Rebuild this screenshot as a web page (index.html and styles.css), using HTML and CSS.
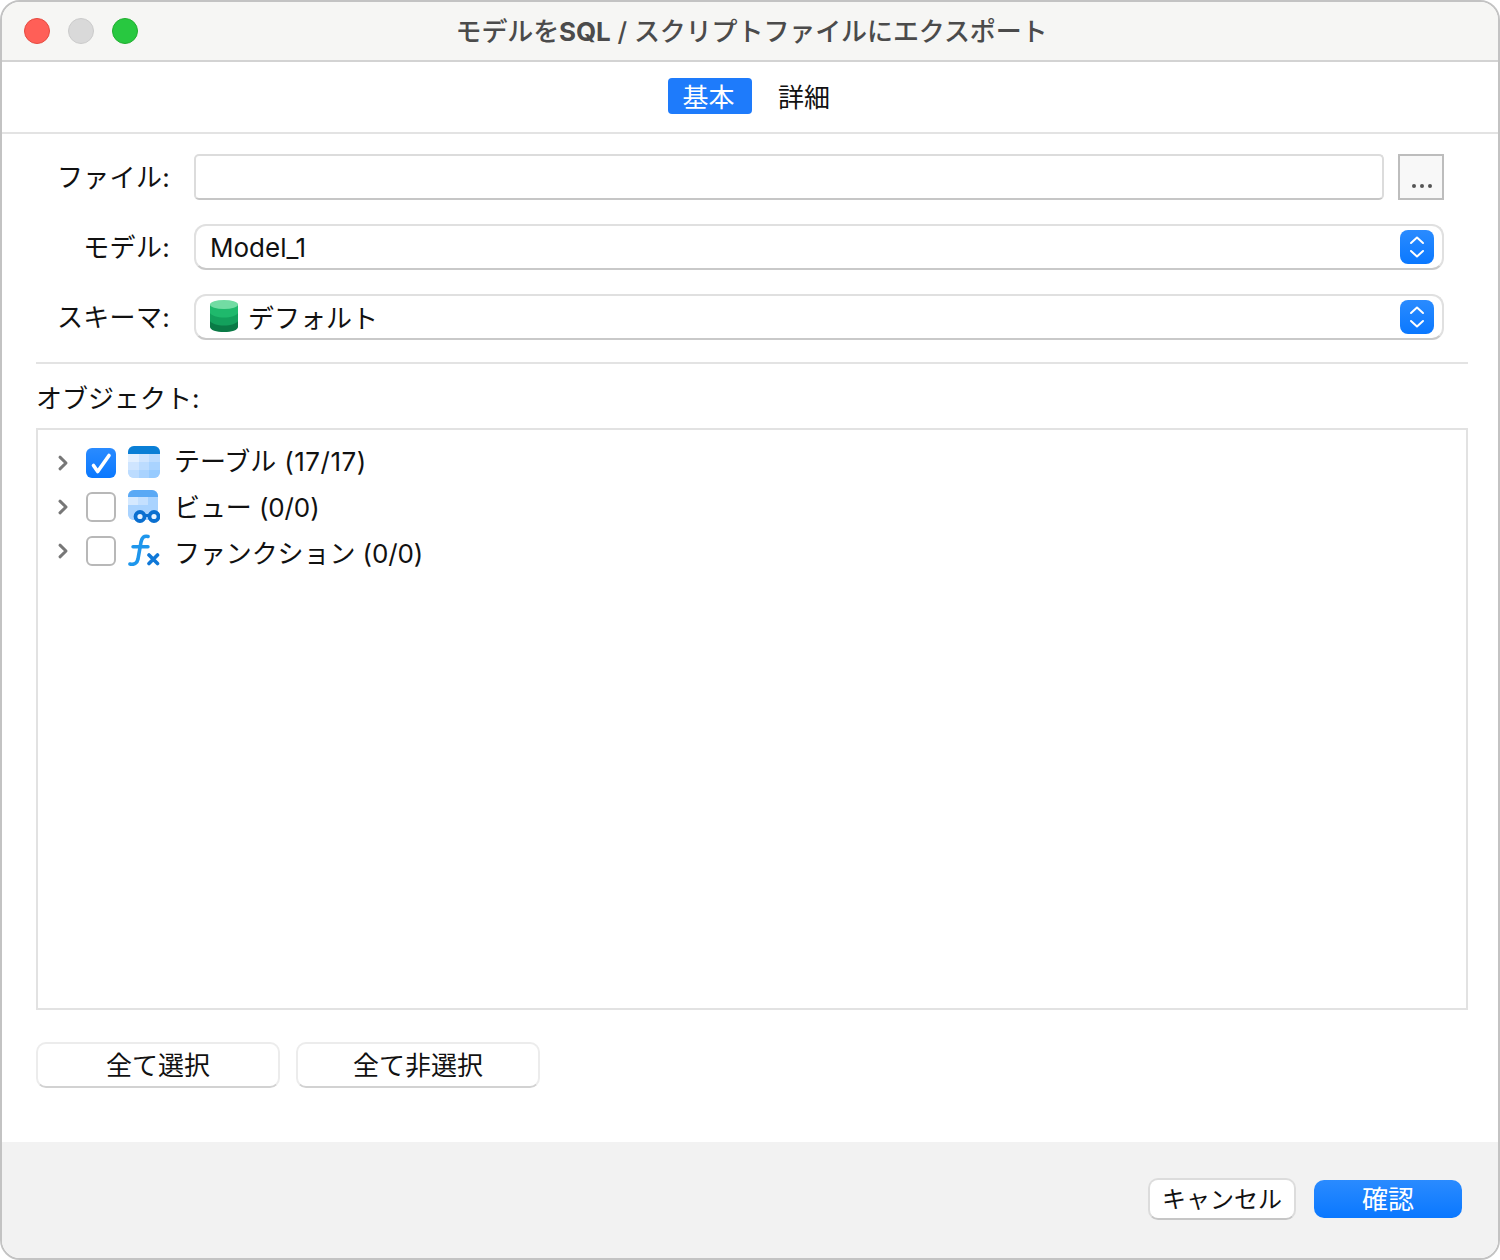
FILE: index.html
```html
<!DOCTYPE html>
<html lang="ja">
<head>
<meta charset="utf-8">
<title>モデルをSQL / スクリプトファイルにエクスポート</title>
<link rel="stylesheet" href="styles.css">
</head>
<body>
<div class="window">
  <header class="titlebar">
    <div class="lights">
      <span class="light red"></span>
      <span class="light gray"></span>
      <span class="light green"></span>
    </div>
    <div class="title">モデルを<b class="title-strong">SQL</b> / スクリプトファイルにエクスポート</div>
  </header>
  <nav class="tabs">
    <span class="tab active">基本</span>
    <span class="tab">詳細</span>
  </nav>
  <main class="content">
    <section class="form">
      <div class="row">
        <label class="label">ファイル:</label>
        <div class="input"></div>
        <div class="browse"><span class="dots"><i></i><i></i><i></i></span></div>
      </div>
      <div class="row">
        <label class="label">モデル:</label>
        <div class="select">
          <span class="select-text model-text">Model_1</span>
          <span class="stepper"><svg width="34" height="34" viewBox="0 0 34 34" fill="none" stroke="#fff" stroke-width="2" stroke-linecap="round" stroke-linejoin="round"><path d="M11 13l6-5.500 6 5.500"/><path d="M11 21l6 5.500 6-5.500"/></svg></span>
        </div>
      </div>
      <div class="row">
        <label class="label">スキーマ:</label>
        <div class="select">
          <svg class="db" width="28" height="32" viewBox="0 0 28 32">
            <path d="M0 4.500h28V27c0 3-6.300 5-14 5S0 30 0 27z" fill="#0a7a46"/>
            <path d="M0 4.500h28V21c-1.500 2.500-7 4.500-14 4.500S1.500 23.500 0 21z" fill="#13a05c"/>
            <path d="M0 4.500h28V13c-1.500 2.500-7 4.500-14 4.500S1.500 15.500 0 13z" fill="#1fb96c"/>
            <ellipse cx="14" cy="4.500" rx="14" ry="4.500" fill="#72dca3"/>
          </svg>
          <span class="select-text">デフォルト</span>
          <span class="stepper"><svg width="34" height="34" viewBox="0 0 34 34" fill="none" stroke="#fff" stroke-width="2" stroke-linecap="round" stroke-linejoin="round"><path d="M11 13l6-5.500 6 5.500"/><path d="M11 21l6 5.500 6-5.500"/></svg></span>
        </div>
      </div>
    </section>
    <hr class="divider">
    <div class="objects-label">オブジェクト:</div>
    <section class="tree">
      <div class="tree-controls">
        <div class="tree-row">
          <svg class="chev" width="12" height="16" viewBox="0 0 12 16" fill="none" stroke="#777" stroke-width="3" stroke-linecap="round" stroke-linejoin="round"><path d="M3 2.200L9 8l-6 5.800"/></svg>
          <span class="check on"><svg width="30" height="30" viewBox="0 0 30 30" fill="none" stroke="#fff" stroke-width="3.600" stroke-linecap="round" stroke-linejoin="round"><path d="M7.500 17.500l4.200 6L23 7.500"/></svg></span>
          <svg class="icon" width="32" height="32" viewBox="0 0 32 32">
            <defs><clipPath id="clipT"><rect width="32" height="32" rx="6"/></clipPath></defs>
            <g clip-path="url(#clipT)">
              <rect width="32" height="32" fill="#c4e0ff"/>
              <rect width="32" height="8" fill="#0a7fd6"/>
              <rect y="8" width="11" height="8" fill="#e3f0ff"/><rect x="11" y="8" width="10" height="8" fill="#cfe5ff"/><rect x="21" y="8" width="11" height="8" fill="#bcdcff"/>
              <rect y="16" width="11" height="8" fill="#cfe5ff"/><rect x="11" y="16" width="10" height="8" fill="#bcdcff"/><rect x="21" y="16" width="11" height="8" fill="#a9d3ff"/>
              <rect y="24" width="11" height="8" fill="#bcdcff"/><rect x="11" y="24" width="10" height="8" fill="#a9d3ff"/><rect x="21" y="24" width="11" height="8" fill="#97cbff"/>
            </g>
          </svg>
        </div>
        <div class="tree-row">
          <svg class="chev" width="12" height="16" viewBox="0 0 12 16" fill="none" stroke="#777" stroke-width="3" stroke-linecap="round" stroke-linejoin="round"><path d="M3 2.200L9 8l-6 5.800"/></svg>
          <span class="check"></span>
          <svg class="icon" width="32" height="33" viewBox="0 0 32 33">
            <defs><clipPath id="clipV"><rect width="30" height="30" rx="6"/></clipPath></defs>
            <g clip-path="url(#clipV)">
              <rect width="30" height="30" fill="#bcdcff"/>
              <rect width="30" height="7" fill="#5aa9f5"/>
              <rect y="7" width="10" height="8" fill="#d5e9ff"/><rect x="10" y="7" width="10" height="8" fill="#c4e0ff"/><rect x="20" y="7" width="10" height="8" fill="#a9d3ff"/>
              <rect y="15" width="30" height="15" fill="#a9d3ff"/>
            </g>
            <circle cx="12" cy="26.500" r="4.500" fill="#e8f3ff" stroke="#0a6fd0" stroke-width="3.800"/>
            <circle cx="26" cy="26.500" r="4.500" fill="#e8f3ff" stroke="#0a6fd0" stroke-width="3.800"/>
            <path d="M16 25.500h6" stroke="#0a6fd0" stroke-width="3"/>
          </svg>
        </div>
        <div class="tree-row">
          <svg class="chev" width="12" height="16" viewBox="0 0 12 16" fill="none" stroke="#777" stroke-width="3" stroke-linecap="round" stroke-linejoin="round"><path d="M3 2.200L9 8l-6 5.800"/></svg>
          <span class="check"></span>
          <svg class="icon" width="32" height="32" viewBox="0 0 32 32" fill="none" stroke-linecap="round">
            <path d="M2 30c4 1 7-.5 8-5l3-17c1-4.500 3-6.500 7-5.500" stroke="#1e96ec" stroke-width="3.600"/>
            <path d="M5 12.800h15" stroke="#1e96ec" stroke-width="3.400"/>
            <path d="M21 21l8.500 8.500M29.500 21L21 29.500" stroke="#0f78d8" stroke-width="3.600"/>
          </svg>
        </div>
      </div>
      <div class="tree-labels">
        <div class="tree-text">テーブル <span class="count-wide">(17/17)</span></div>
        <div class="tree-text">ビュー (0/0)</div>
        <div class="tree-text">ファンクション (0/0)</div>
      </div>
    </section>
    <div class="select-buttons">
      <button class="btn wide">全て選択</button>
      <button class="btn wide">全て非選択</button>
    </div>
  </main>
  <footer class="footer">
    <button class="btn cancel">キャンセル</button>
    <button class="btn primary">確認</button>
  </footer>
</div>
</body>
</html>
```
FILE: styles.css
```css
* { box-sizing: border-box; }
html, body { margin: 0; padding: 0; background: #fff; }
body {
  width: 1500px;
  height: 1260px;
  font-family: "Inter", "Noto Sans CJK JP", sans-serif;
  font-size: 26px;
  color: #111;
}
.window {
  width: 1500px;
  height: 1260px;
  border: 2px solid #c3c3c3;
  border-radius: 20px;
  overflow: hidden;
  display: flex;
  flex-direction: column;
  background: #fff;
}
.titlebar {
  height: 60px;
  flex: none;
  background: #f6f6f4;
  border-bottom: 2px solid #d3d3d3;
  position: relative;
  display: flex;
  align-items: center;
  justify-content: center;
}
.lights {
  position: absolute;
  left: 22px;
  top: 16px;
  display: flex;
  gap: 18px;
}
.light {
  width: 26px;
  height: 26px;
  border-radius: 50%;
  border: 1px solid;
}
.red { background: #ff5f57; border-color: #e5493f; }
.gray { background: #d9d9d9; border-color: #cbcbcb; }
.green { background: #28c840; border-color: #1fae2e; }
.title {
  font-size: 26px;
  font-weight: 500;
  color: #4b4b4b;
  line-height: 56px;
  white-space: nowrap;
  padding: 2px 0 0 3px;
  letter-spacing: -0.1px;
}
.title-strong { font-weight: 700; }
.tabs {
  height: 72px;
  flex: none;
  border-bottom: 2px solid #e3e3e3;
  display: flex;
  justify-content: center;
  align-items: flex-start;
  padding: 16px 0 0 14px;
  gap: 10px;
}
.tab {
  width: 84px;
  height: 36px;
  line-height: 40px;
  text-align: center;
  border-radius: 4px;
}
.tab.active {
  background: #1e7bfb;
  color: #fff;
  padding-right: 3px;
}
.content {
  flex: 1;
  padding: 20px 30px 0 34px;
  display: flex;
  flex-direction: column;
  min-height: 0;
}
.form {
  display: flex;
  flex-direction: column;
  gap: 24px;
  padding-right: 24px;
}
.row {
  height: 46px;
  display: flex;
  align-items: center;
}
.label {
  width: 134px;
  text-align: right;
  margin-right: 24px;
  flex: none;
  line-height: 44px;
  padding-top: 2px;
  letter-spacing: 0.3px;
}
.input {
  flex: 1;
  height: 46px;
  border-radius: 5px;
  border: 2px solid #dcdcdc;
  border-bottom-color: #c6c6c6;
  background: #fff;
}
.browse {
  width: 46px;
  height: 46px;
  margin-left: 14px;
  border: 2px solid #bdbdbd;
  background: #f8f8f8;
  display: flex;
  align-items: flex-end;
  justify-content: center;
  padding: 0 0 10px 1px;
}
.dots { display: flex; gap: 4px; }
.dots i {
  width: 4px;
  height: 4px;
  border-radius: 50%;
  background: #555;
}
.select {
  flex: 1;
  height: 46px;
  border-radius: 12px;
  border: 2px solid #e0e0e0;
  border-bottom-color: #c9c9c9;
  background: #fff;
  display: flex;
  align-items: center;
  padding: 0 8px 0 14px;
}
.select-text { flex: 1; line-height: 38px; padding-top: 4px; }
.model-text { padding-top: 2px; }
.db { flex: none; margin: -2px 10px 0 0; }
.stepper {
  width: 34px;
  height: 34px;
  flex: none;
  border-radius: 8px;
  background: linear-gradient(#2a8bff, #0a78ff);
  display: block;
}
.stepper svg { display: block; }
.divider {
  margin: 22px 0 0;
  height: 2px;
  border: 0;
  background: #e3e3e3;
}
.objects-label {
  height: 64px;
  line-height: 70px;
  flex: none;
}
.tree {
  height: 582px;
  flex: none;
  border: 2px solid #e2e2e2;
  padding-top: 11px;
  display: flex;
  align-items: flex-start;
}
.tree-controls { flex: none; }
.tree-row {
  height: 44px;
  display: flex;
  align-items: center;
  padding-left: 19px;
}
.chev { flex: none; margin-right: 17px; }
.check {
  width: 30px;
  height: 30px;
  flex: none;
  border-radius: 6px;
  border: 2px solid #b8b8b8;
  background: #fff;
  margin-right: 12px;
}
.check.on {
  border: 0;
  background: linear-gradient(#2a8bff, #0a78ff);
}
.check svg { display: block; }
.icon { flex: none; margin: -2px 14px 0 0; }
.tree-labels { margin-top: -2px; }
.tree-text {
  height: 46px;
  line-height: 46px;
  letter-spacing: -0.1px;
}
.count-wide { letter-spacing: 0.5px; margin-left: 1px; }
.select-buttons {
  margin-top: 32px;
  display: flex;
  gap: 16px;
}
.btn {
  font-family: inherit;
  font-size: 26px;
  color: #111;
  padding: 0;
  line-height: 1;
  background: #fff;
  border-radius: 10px;
}
.wide {
  width: 244px;
  height: 46px;
  padding-top: 2px;
  border: 2px solid #ececec;
  border-bottom-color: #d2d2d2;
}
.footer {
  height: 116px;
  flex: none;
  background: #f2f2f2;
  display: flex;
  justify-content: flex-end;
  align-items: center;
  gap: 18px;
  padding: 0 36px 2px 0;
}
.cancel {
  width: 148px;
  height: 42px;
  font-size: 24px;
  padding-top: 1px;
  border: 2px solid #dcdcdc;
  border-bottom-color: #c6c6c6;
}
.primary {
  width: 148px;
  height: 38px;
  padding-top: 2px;
  border: 0;
  color: #fff;
  background: linear-gradient(#2a8bff, #0a78ff);
}
```
